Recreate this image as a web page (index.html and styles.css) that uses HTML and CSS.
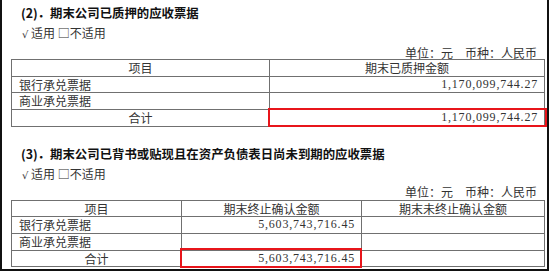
FILE: index.html
```html
<!DOCTYPE html>
<html lang="zh-CN">

<head>
    <meta charset="UTF-8">
    <meta name="viewport" content="width=device-width, initial-scale=1.0">
    <title>应收票据</title>
    <link rel="stylesheet" href="styles.css">
</head>

<body>
    <div class="page">
        <!-- (2) pledged notes -->
        <section class="block">
            <h2 class="title">(2)．期末公司已质押的应收票据</h2>
            <p class="apply"><span class="tick">√</span>适用 □不适用</p>
            <p class="unit">单位：元　币种：人民币</p>
            <table class="grid">
                <tr>
                    <th class="col-a">项目</th>
                    <th>期末已质押金额</th>
                </tr>
                <tr>
                    <td>银行承兑票据</td>
                    <td class="num">1,170,099,744.27</td>
                </tr>
                <tr>
                    <td>商业承兑票据</td>
                    <td class="num"></td>
                </tr>
                <tr>
                    <td class="center">合计</td>
                    <td class="num mark mark-one">1,170,099,744.27</td>
                </tr>
            </table>
        </section>

        <!-- (3) endorsed or discounted notes -->
        <section class="block block-next">
            <h2 class="title">(3)．期末公司已背书或贴现且在资产负债表日尚未到期的应收票据</h2>
            <p class="apply"><span class="tick">√</span>适用 □不适用</p>
            <p class="unit unit-tight">单位：元　币种：人民币</p>
            <table class="grid grid-gap">
                <tr>
                    <th class="col-b">项目</th>
                    <th class="col-c">期末终止确认金额</th>
                    <th>期末未终止确认金额</th>
                </tr>
                <tr>
                    <td>银行承兑票据</td>
                    <td class="num">5,603,743,716.45</td>
                    <td></td>
                </tr>
                <tr>
                    <td>商业承兑票据</td>
                    <td class="num"></td>
                    <td></td>
                </tr>
                <tr>
                    <td class="center">合计</td>
                    <td class="num mark mark-two">5,603,743,716.45</td>
                    <td></td>
                </tr>
            </table>
        </section>
    </div>
</body>

</html>
```

FILE: styles.css
```css
* {
    box-sizing: border-box;
}

body {
    margin: 0;
    background: #fff;
    font-family: "Noto Sans CJK SC", sans-serif;
    color: #333;
}

.page {
    width: 549px;
    height: 271px;
    border-left: 2px solid #111;
    border-right: 2px solid #111;
    border-bottom: 2px solid #111;
    padding: 3px 2px 0 9px;
}

.block p,
.block h2 {
    margin: 0;
}

.block-next {
    margin-top: 17px;
}

.title {
    padding-left: 10px;
    font-size: 12.4px;
    line-height: 20px;
    font-weight: bold;
    color: #111;
}

.apply {
    padding-left: 11px;
    font-size: 12px;
    line-height: 20px;
}

.tick {
    display: inline-block;
    width: 9px;
    font-family: "DejaVu Sans", sans-serif;
    font-size: 10px;
}

.unit {
    margin-top: 2px !important;
    padding-right: 8px;
    text-align: right;
    font-size: 12px;
    line-height: 12px;
}

.unit-tight {
    margin-top: 0 !important;
}

.grid {
    width: 100%;
    table-layout: fixed;
    border-collapse: separate;
    border-spacing: 0;
    border-top: 1px solid #707070;
    border-left: 1px solid #707070;
    font-size: 12px;
}

.grid-gap {
    margin-top: 2px;
}

.grid th,
.grid td {
    height: 16.67px;
    padding: 0 7px;
    line-height: 15.67px;
    border-right: 1px solid #707070;
    border-bottom: 1px solid #707070;
    font-weight: normal;
    text-align: left;
    white-space: nowrap;
}

.grid th,
.grid .center {
    text-align: center;
}

.col-a {
    width: 258px;
}

.col-b {
    width: 170px;
}

.col-c {
    width: 180px;
}

.grid .num {
    text-align: right;
    font-family: "Liberation Serif", serif;
    letter-spacing: 0.8px;
    padding-right: 6px;
}

.mark {
    position: relative;
}

.mark::after {
    content: "";
    position: absolute;
    border: 2px solid #e8151b;
}

.mark-one::after {
    top: -2px;
    left: -2px;
    right: -3px;
    bottom: -1px;
}

.mark-two::after {
    top: -3px;
    left: -2px;
    right: -1px;
    bottom: -2px;
}
```
